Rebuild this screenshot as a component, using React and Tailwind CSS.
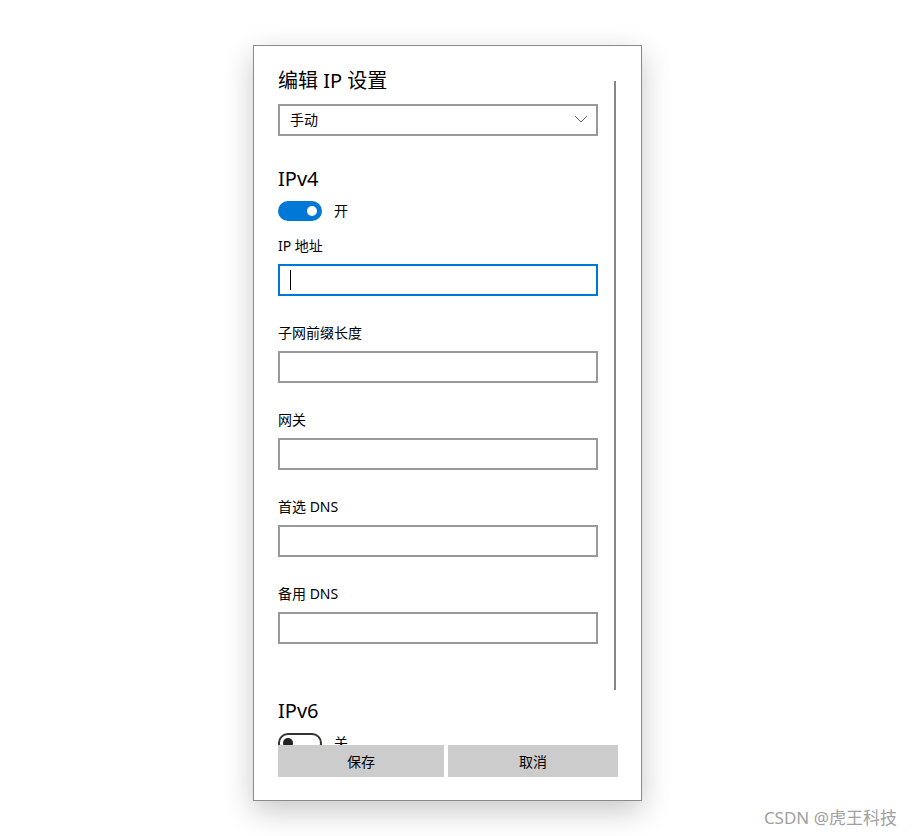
import React from "react";

const font = { fontFamily: '"Noto Sans", "Noto Sans CJK SC", sans-serif' };

const Field = ({ label, active }) => (
  <div className="mt-[28px] first:mt-[16px]">
    <div className="h-[20px] text-[14px] leading-[18px] text-black">{label}</div>
    <div
      className={`mt-[7px] w-[320px] h-[32px] border-2 flex items-center pl-[10px] ${
        active ? "border-[#0078d7]" : "border-[#999999]"
      }`}
    >
      {active && <span className="w-px h-[20px] bg-black" />}
    </div>
  </div>
);

const Toggle = ({ on, label }) => (
  <div className="mt-[8px] flex items-center gap-[12px]">
    {on ? (
      <div className="w-[44px] h-[20px] rounded-full bg-[#0078d7] flex items-center justify-end pr-[5px]">
        <span className="w-[10px] h-[10px] rounded-full bg-white" />
      </div>
    ) : (
      <div className="w-[44px] h-[20px] rounded-full border-2 border-[#333333] flex items-center pl-[3px]">
        <span className="w-[10px] h-[10px] rounded-full bg-[#222222]" />
      </div>
    )}
    <span className="text-[14px] leading-[20px] text-black">{label}</span>
  </div>
);

export default function App() {
  return (
    <div className="relative w-[913px] h-[836px] bg-white pt-[45px] pl-[253px]" style={font}>
      <div className="relative w-[389px] h-[756px] bg-white border border-[#8a8a8a] shadow-[0_10px_28px_rgba(0,0,0,0.22)] flex flex-col">
        {/* scrollable content */}
        <div className="h-[699px] overflow-hidden pl-[24px]">
          <h1 className="mt-[21px] text-[20px] leading-[28px] text-black">编辑 IP 设置</h1>
          <div className="mt-[9px] w-[320px] h-[32px] border-2 border-[#999999] flex items-center justify-between pl-[10px] pr-[8px] pb-[2px]">
            <span className="text-[14px] text-black">手动</span>
            <svg width="14" height="8" viewBox="0 0 14 8" fill="none">
              <polyline points="1,1 7,7 13,1" stroke="#666" strokeWidth="1" />
            </svg>
          </div>

          <h2 className="mt-[29px] text-[20px] leading-[28px] text-black">IPv4</h2>
          <Toggle on label="开" />

          <div>
            <Field label="IP 地址" active />
            <Field label="子网前缀长度" />
            <Field label="网关" />
            <Field label="首选 DNS" />
            <Field label="备用 DNS" />
          </div>

          <h2 className="mt-[53px] text-[20px] leading-[28px] text-black">IPv6</h2>
          <Toggle label="关" />
        </div>

        {/* scrollbar */}
        <div className="absolute left-[360px] top-[35px] w-[2px] h-[609px] bg-[#868686]" />

        {/* buttons */}
        <div className="pl-[24px] flex gap-[4px]">
          <button className="w-[166px] h-[32px] bg-[#cccccc] text-[14px] text-black">保存</button>
          <button className="w-[170px] h-[32px] bg-[#cccccc] text-[14px] text-black">取消</button>
        </div>
      </div>

      <div className="absolute right-[16px] bottom-[6px] text-[17px] text-[#a0a0a0]">CSDN @虎王科技</div>
    </div>
  );
}
